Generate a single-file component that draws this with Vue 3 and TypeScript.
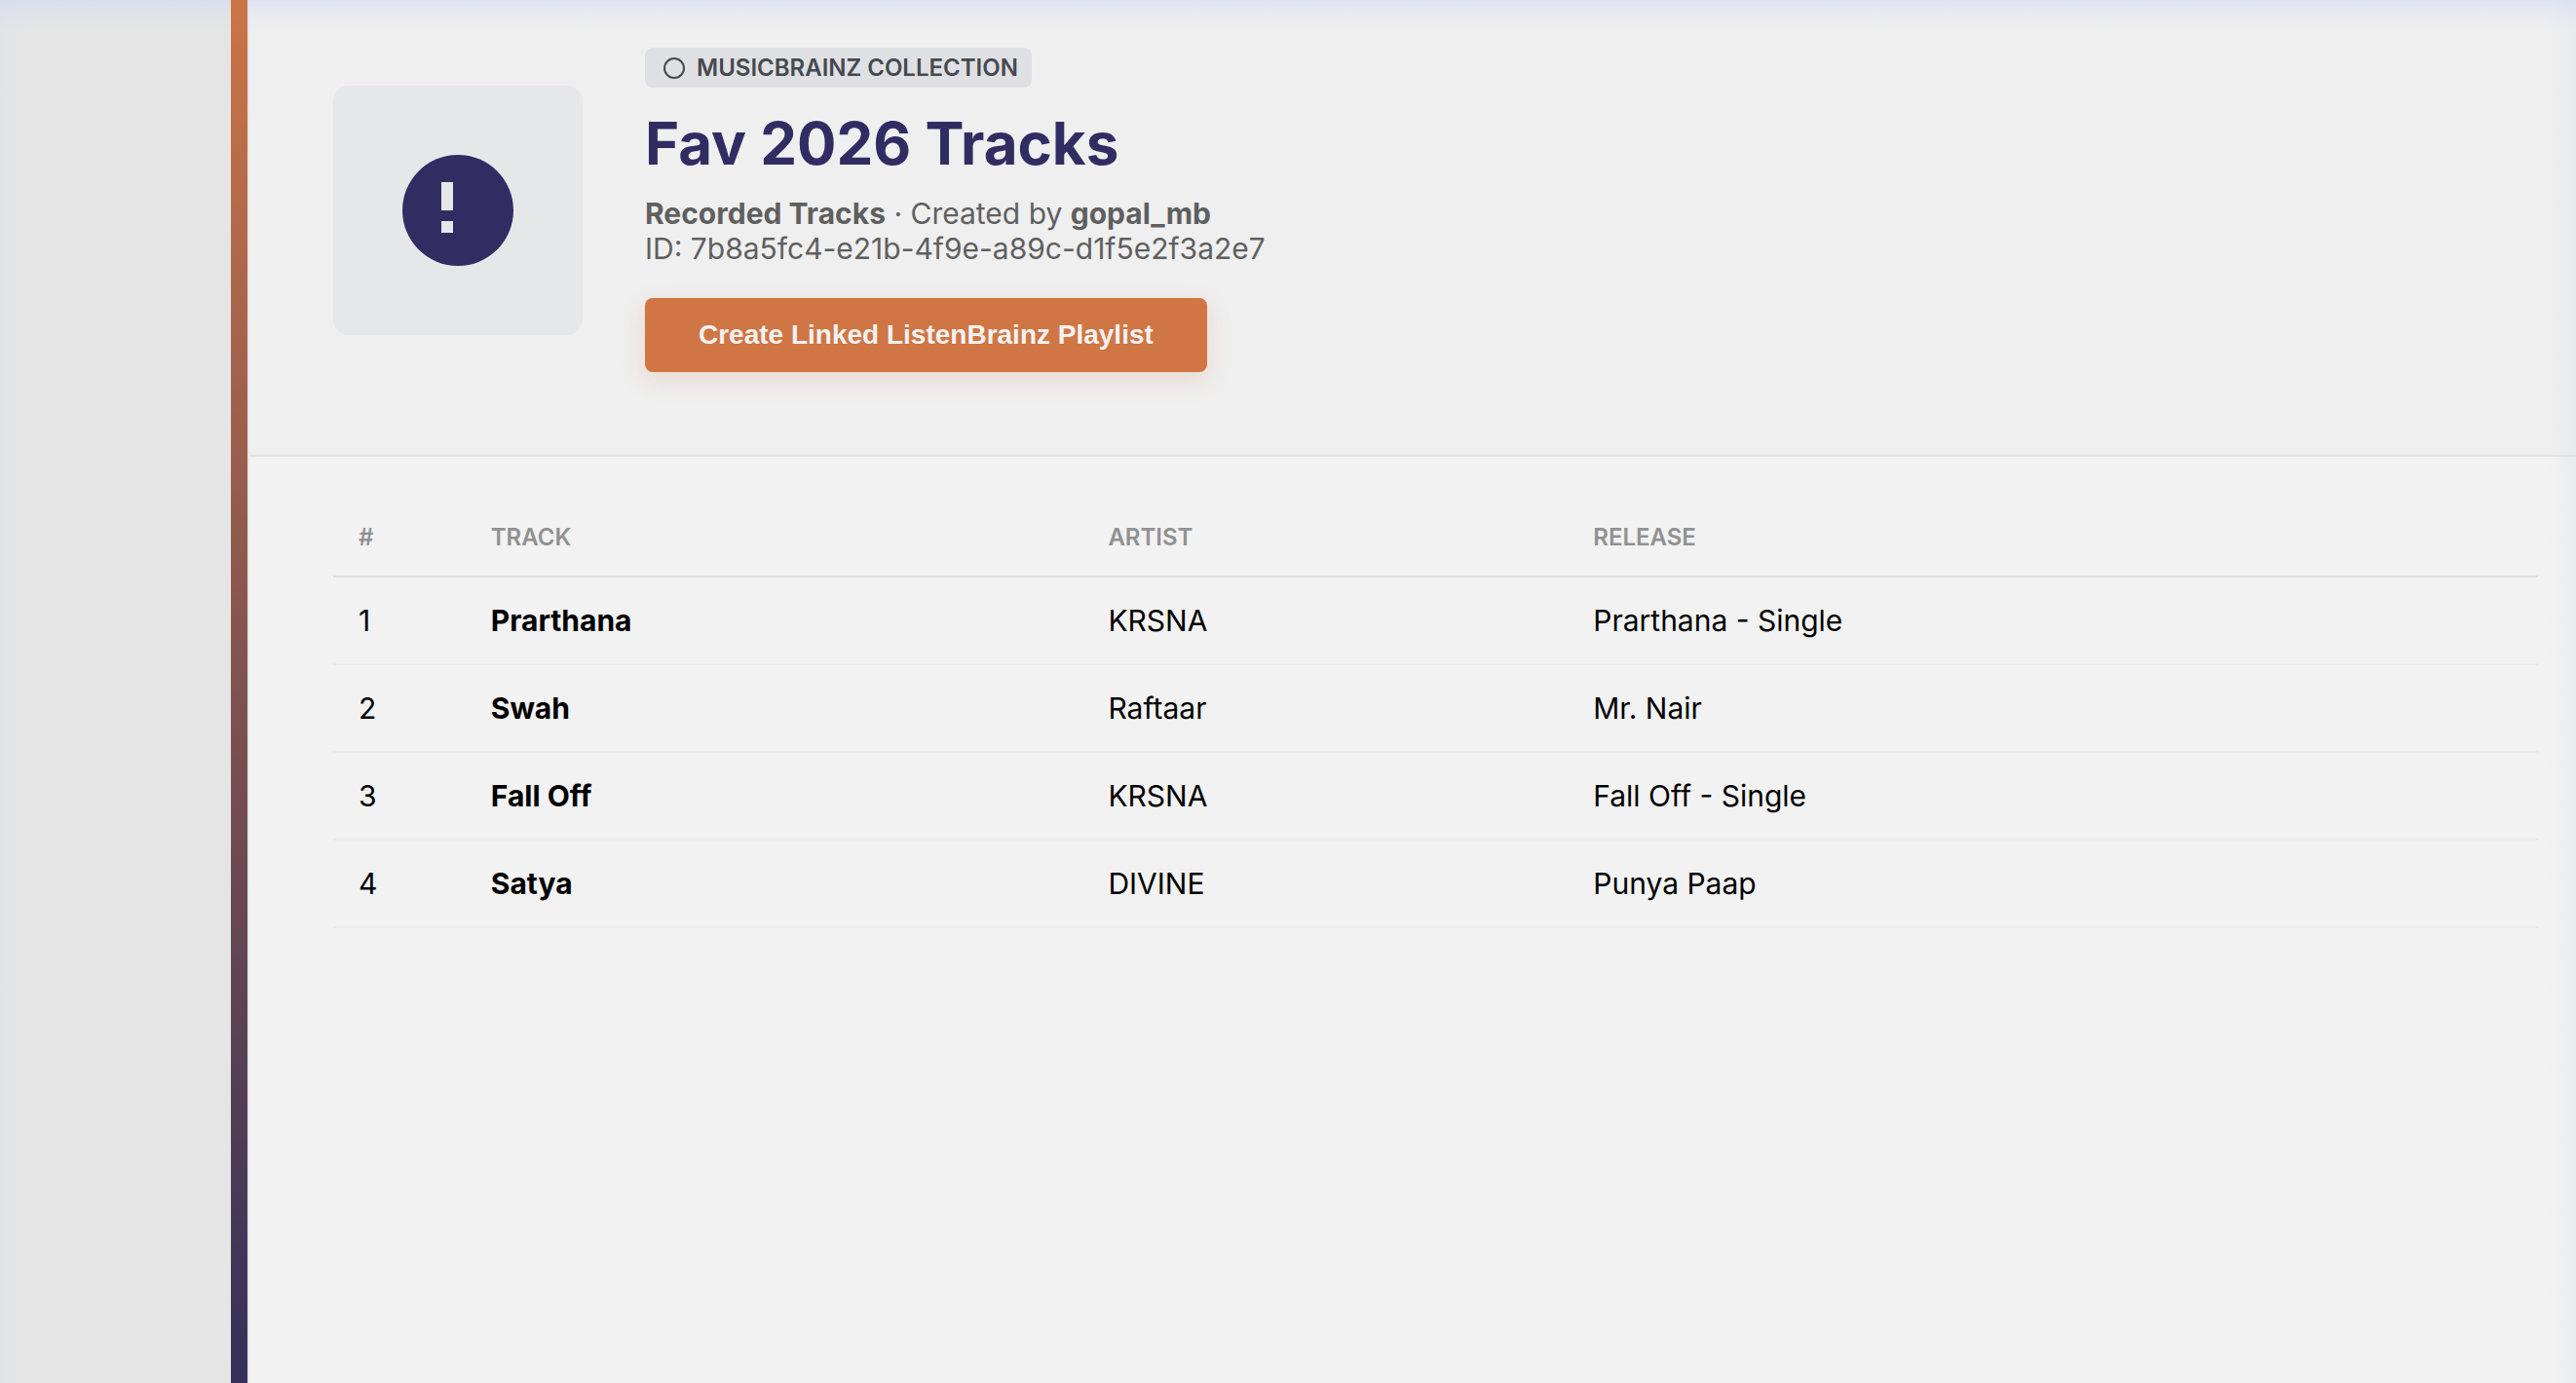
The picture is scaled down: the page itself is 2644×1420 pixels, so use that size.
<script setup lang="ts">
interface Track {
  title: string
  artist: string
  release: string
}

const tracks: Track[] = [
  { title: 'Prarthana', artist: 'KRSNA', release: 'Prarthana - Single' },
  { title: 'Swah', artist: 'Raftaar', release: 'Mr. Nair' },
  { title: 'Fall Off', artist: 'KRSNA', release: 'Fall Off - Single' },
  { title: 'Satya', artist: 'DIVINE', release: 'Punya Paap' },
]
</script>

<template>
  <div class="page">
    <aside class="sidebar"></aside>
    <div class="strip"></div>
    <main class="content">
      <header class="hero">
        <div class="cover">
          <svg width="114" height="114" viewBox="0 0 114 114" aria-hidden="true">
            <circle cx="57" cy="57" r="57" fill="#312d63" />
            <rect x="40" y="28" width="12" height="29" fill="#e6e7e9" />
            <rect x="40" y="68" width="12" height="12" fill="#e6e7e9" />
          </svg>
        </div>
        <div class="info">
          <span class="badge">
            <svg width="22" height="22" viewBox="0 0 22 22" aria-hidden="true">
              <circle cx="11" cy="11" r="10" fill="none" stroke="#454950" stroke-width="2" />
            </svg>
            MUSICBRAINZ COLLECTION
          </span>
          <h1>Fav 2026 Tracks</h1>
          <p class="meta">
            <strong>Recorded Tracks</strong> · Created by <strong>gopal_mb</strong><br />
            ID: 7b8a5fc4-e21b-4f9e-a89c-d1f5e2f3a2e7
          </p>
          <button type="button" class="create">Create Linked ListenBrainz Playlist</button>
        </div>
      </header>
      <section class="list">
        <table>
          <colgroup>
            <col class="num" />
            <col class="track" />
            <col class="artist" />
            <col class="release" />
          </colgroup>
          <thead>
            <tr>
              <th scope="col">#</th>
              <th scope="col">TRACK</th>
              <th scope="col">ARTIST</th>
              <th scope="col">RELEASE</th>
            </tr>
          </thead>
          <tbody>
            <tr v-for="(track, index) in tracks" :key="track.title">
              <td>{{ index + 1 }}</td>
              <td class="title">{{ track.title }}</td>
              <td>{{ track.artist }}</td>
              <td>{{ track.release }}</td>
            </tr>
          </tbody>
        </table>
      </section>
    </main>
    <div class="glow"></div>
  </div>
</template>

<style>
body {
  margin: 0;
}
</style>

<style scoped>
.page {
  position: relative;
  display: flex;
  min-height: 100vh;
  background: #f2f2f2;
  color: #000;
  font-family: Inter, "Liberation Sans", sans-serif;
  font-size: 30px;
  line-height: 36px;
}

.sidebar {
  flex: 0 0 237px;
  background: #e5e5e5;
}

.strip {
  position: relative;
  z-index: 1;
  flex: 0 0 17px;
  background: linear-gradient(#cb7447, #343059);
}

.content {
  flex: 1;
  min-width: 0;
  border-left: 2px solid #e6e7e8;
}

.hero {
  display: flex;
  align-items: center;
  gap: 64px;
  padding: 49px 86px 85px;
  border-bottom: 2px solid #e2e2e3;
  background: #efefef;
}

.cover {
  display: flex;
  flex: 0 0 256px;
  align-items: center;
  justify-content: center;
  height: 256px;
  border-radius: 16px;
  background: #e6e7e9;
}

.info {
  display: flex;
  flex-direction: column;
  align-items: flex-start;
}

.badge {
  display: flex;
  align-items: center;
  gap: 12px;
  height: 41px;
  padding: 0 14px 0 19px;
  border-radius: 8px;
  background: #dfe0e4;
  color: #454950;
  font-size: 24px;
  font-weight: 600;
}

h1 {
  margin: 19px 0 16px;
  color: #312d63;
  font-size: 60px;
  font-weight: 700;
  line-height: 76px;
}

.meta {
  margin: 0 0 33px;
  color: #5f5f5f;
}

.meta strong {
  font-weight: 700;
}

.create {
  height: 76px;
  padding: 0 55px;
  border: 0;
  border-radius: 8px;
  background: #d07644;
  box-shadow: 0 8px 24px rgba(208, 118, 68, 0.2);
  color: #f2f2f2;
  font-family: "Liberation Sans", Arial, sans-serif;
  font-size: 28px;
  font-weight: 700;
}

.list {
  padding: 40px 39px 40px 86px;
}

table {
  width: 100%;
  border-collapse: separate;
  border-spacing: 0;
  table-layout: fixed;
}

th,
td {
  padding: 26px;
  text-align: left;
}

th {
  padding-top: 28px;
  padding-bottom: 24px;
  border-bottom: 2px solid #dfdfdf;
  color: #919191;
  font-size: 24px;
  font-weight: 600;
  line-height: 30px;
}

td {
  border-bottom: 2px solid #ebebec;
}

.num {
  width: 6%;
}

.track {
  width: 28%;
}

.artist {
  width: 22%;
}

.release {
  width: 44%;
}

.title {
  font-weight: 700;
}

/* Soft blue light along the window edges */
.glow {
  position: absolute;
  inset: 0;
  pointer-events: none;
  background:
    linear-gradient(rgba(208, 216, 245, 0.5), rgba(208, 216, 245, 0.2) 14px, rgba(208, 216, 245, 0) 32px),
    linear-gradient(to right, rgba(216, 224, 240, 0.35), rgba(216, 224, 240, 0) 28px),
    linear-gradient(to left, rgba(216, 224, 240, 0.35), rgba(216, 224, 240, 0) 28px);
}
</style>
